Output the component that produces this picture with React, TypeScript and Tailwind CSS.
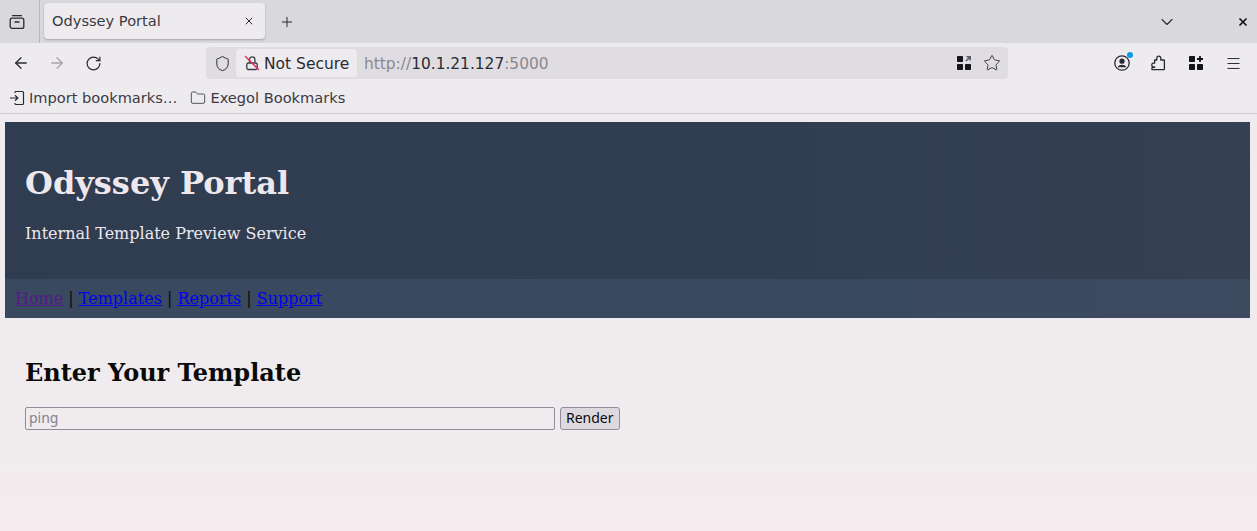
import { ArrowLeft, ArrowRight, RotateCw, Shield, Star, ChevronDown, X, Plus, Menu, Folder } from "lucide-react"

const chrome = { fontFamily: '"DejaVu Sans", sans-serif' }

function ContainerIcon() {
  return (
    <svg width="16" height="16" viewBox="0 0 16 16" fill="none" stroke="#2b2a33" strokeWidth="1.3">
      <path d="M3.5 1.7h9" strokeLinecap="round" />
      <rect x="1.2" y="4.2" width="13.6" height="10.2" rx="2" />
      <path d="M6 8h4" strokeLinecap="round" />
    </svg>
  )
}

function BrokenLock() {
  return (
    <svg width="16" height="16" viewBox="0 0 16 16" fill="none">
      <path d="M5.5 7.5V4.5a2.7 2.7 0 0 1 5.4 0V7.5" stroke="#3a3944" strokeWidth="1.3" />
      <path d="M2.8 9.5a1.5 1.5 0 0 1 1.5-1.5h7.4a1.5 1.5 0 0 1 1.5 1.5v3.5a1.5 1.5 0 0 1-1.5 1.5H4.3a1.5 1.5 0 0 1-1.5-1.5z" stroke="#3a3944" strokeWidth="1.3" />
      <path d="M1 1l14 14" stroke="#e22850" strokeWidth="1.3" />
    </svg>
  )
}

function AppsIcon({ arrow }: { arrow?: boolean }) {
  return (
    <svg width="16" height="16" viewBox="0 0 16 16" fill="#15141a">
      <rect x="1" y="1" width="6" height="6" rx="0.7" />
      <rect x="1" y="9" width="6" height="6" rx="0.7" />
      <rect x="9" y="9" width="6" height="6" rx="0.7" />
      {arrow ? (
        <path d="M10 6l4-4M10.5 1.8h3.7v3.7" fill="none" stroke="#5b5b66" strokeWidth="1.5" />
      ) : (
        <path d="M12 1v6M9 4h6" fill="none" stroke="#15141a" strokeWidth="1.8" />
      )}
    </svg>
  )
}

function AccountIcon() {
  return (
    <div className="relative w-4 h-4">
      <svg width="16" height="16" viewBox="0 0 16 16" fill="none">
        <circle cx="8" cy="8" r="7.2" stroke="#2b2a33" strokeWidth="1.3" />
        <circle cx="8" cy="6.2" r="2.6" fill="#2b2a33" />
        <path d="M3.6 12.2c1-1.8 2.6-2.5 4.4-2.5s3.4.7 4.4 2.5z" fill="#2b2a33" />
      </svg>
      <div className="absolute -top-[3px] -right-[3px] w-[6px] h-[6px] rounded-full bg-[#0a9be8]" />
    </div>
  )
}

function PuzzleIcon() {
  return (
    <svg width="16" height="16" viewBox="0 0 16 16" fill="none" stroke="#2b2a33" strokeWidth="1.3" strokeLinejoin="round">
      <path d="M2 14.6h11.8a.6.6 0 0 0 .6-.6V5.6a.6.6 0 0 0-.6-.6h-3V3.2a2 2 0 0 0-4 0V5H4.6v3.2H3a1.9 1.9 0 0 0 0 3.6h1.6v.6H2z" />
    </svg>
  )
}

function ImportIcon() {
  return (
    <svg width="16" height="16" viewBox="0 0 16 16" fill="none" stroke="#2b2a33" strokeWidth="1.2">
      <path d="M6 3V2.5A1 1 0 0 1 7 1.5h6.5a1 1 0 0 1 1 1v11a1 1 0 0 1-1 1H7a1 1 0 0 1-1-1V13" />
      <path d="M1 8h7.5M6 5.3L8.8 8 6 10.7" />
    </svg>
  )
}

export default function App() {
  return (
    <div className="min-h-[531px] flex flex-col bg-gradient-to-b from-[#eeeaee] via-[#f0ecee] via-85% to-[#f5ebee] overflow-hidden">
      <div style={chrome} className="text-[#2b2a33]">
        {/* tab strip */}
        <div className="h-[43px] bg-[#d9d8dd] flex items-center">
          <div className="w-10 h-full flex items-center justify-center border-r border-[#b9b8bf] pr-[6px]">
            <ContainerIcon />
          </div>
          <div className="ml-1 mt-[-2px] w-[221px] h-[36px] bg-[#eeebef] rounded-[4px] shadow-[0_1px_2px_rgba(0,0,0,0.25)] flex items-center justify-between pl-2 pr-[10px]">
            <span className="text-[14.6px] pt-px text-[#3b3a44]">Odyssey Portal</span>
            <X size={12} strokeWidth={2} color="#2b2a33" />
          </div>
          <Plus size={16} strokeWidth={1.5} className="ml-[14px]" />
          <div className="flex-1" />
          <ChevronDown size={20} strokeWidth={1.3} className="mr-[60px]" />
          <X size={12} strokeWidth={3.5} className="mr-2" color="#15141a" />
        </div>

        {/* nav bar */}
        <div className="h-[40px] bg-[#eeebef] flex items-center">
          <div className="w-[206px] flex items-center pl-[12px] gap-[18px]">
            <ArrowLeft size={18} strokeWidth={1.7} />
            <ArrowRight size={18} strokeWidth={1.7} className="text-[#a5a4aa]" />
            <RotateCw size={17} strokeWidth={1.7} className="ml-[1px]" />
          </div>
          <div className="w-[802px] h-[32px] rounded-[4px] bg-[#dfdde1] flex items-center">
            <Shield size={17} strokeWidth={1.4} className="ml-2" />
            <div className="ml-[5px] h-[28px] w-[121px] bg-[#eeebef] rounded-[4px] flex items-center pl-2 gap-[4px]">
              <BrokenLock />
              <span className="text-[15.5px] pt-[3px]">Not Secure</span>
            </div>
            <div className="ml-[7px] pt-[3px] text-[15.4px] text-[#8a8990] flex-1">
              http://<span className="text-[#2b2a33]">10.1.21.127</span>:5000
            </div>
            <AppsIcon arrow />
            <Star size={18} strokeWidth={1.3} className="ml-[11px] mr-[7px]" color="#3a3944" />
          </div>
          <div className="flex-1 flex items-center pl-[106px] gap-[20px]">
            <AccountIcon />
            <PuzzleIcon />
            <div className="ml-[2px]">
              <AppsIcon />
            </div>
            <Menu size={17} strokeWidth={1.4} className="ml-[1px]" />
          </div>
        </div>

        {/* bookmarks */}
        <div className="h-[31px] bg-[#eeebef] border-b border-[#d0ced3] flex items-center pl-[9px] text-[14.6px] text-[#3b3a44]">
          <ImportIcon />
          <span className="ml-[4px]">Import bookmarks…</span>
          <Folder size={16} strokeWidth={1.3} className="ml-[13px]" />
          <span className="ml-[4px]">Exegol Bookmarks</span>
        </div>
      </div>

      {/* page */}
      <main className="pl-[5px] pr-[7px] pt-2 text-[#0a0a0a]" style={{ fontFamily: '"DejaVu Serif", serif' }}>
        <header className="h-[157px] bg-gradient-to-r from-[#303c50] via-[#313d51] via-60% to-[#354152] px-5 pt-[39px] text-[#ece8ed]">
          <h1 className="text-[32px] leading-[45px] font-bold">Odyssey Portal</h1>
          <p className="mt-[18px] text-[16px] leading-[19px]">Internal Template Preview Service</p>
        </header>
        <nav className="h-[39px] bg-gradient-to-r from-[#394960] via-[#394960] via-70% to-[#3e4a60] px-[10px] flex items-center text-[16px] whitespace-pre">
          <a href="#" className="text-[#551a8b] underline">Home</a>
          {" | "}
          <a href="#" className="text-[#0000ee] underline">Templates</a>
          {" | "}
          <a href="#" className="text-[#0000ee] underline">Reports</a>
          {" | "}
          <a href="#" className="text-[#0000ee] underline">Support</a>
        </nav>
        <section className="px-5 pt-[38px]">
          <h2 className="text-[24px] leading-[34px] font-bold">Enter Your Template</h2>
          <form className="mt-[17px] flex items-center gap-[5px]" style={{ fontFamily: '"Noto Sans", sans-serif' }}>
            <input
              placeholder="ping"
              className="w-[530px] h-[23px] px-[3px] pb-[2px] text-[14px] border border-[#8f8d9b] rounded-[2px] bg-transparent placeholder:text-[#85848c]"
            />
            <button type="button" className="h-[23px] px-[5px] pb-[2px] text-[14px] leading-[16px] border border-[#8f8d9b] rounded-[3px] bg-[#ddd9df]">
              Render
            </button>
          </form>
        </section>
      </main>
    </div>
  )
}
